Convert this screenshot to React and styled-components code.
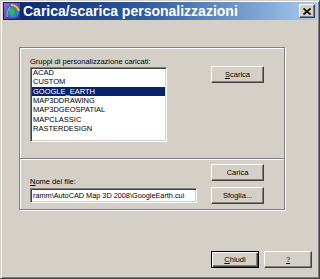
import React from "react";
import styled, { createGlobalStyle } from "styled-components";

const GlobalStyle = createGlobalStyle`
  html, body {
    margin: 0;
    padding: 0;
    background: #d4d0c8;
  }
  body {
    font-family: "Liberation Sans", Arial, sans-serif;
    color: #000;
  }
`;

const Window = styled.div`
  width: 320px;
  height: 279px;
  box-sizing: border-box;
  background: #d4d0c8;
  border: 1px solid;
  border-color: #d4d0c8 #404040 #404040 #d4d0c8;
  box-shadow: inset 1px 1px 0 #fff, inset -1px -1px 0 #808080;
  padding: 1px 2px 2px 2px;
  display: flex;
  flex-direction: column;
`;

const TitleBar = styled.div`
  height: 18px;
  display: flex;
  align-items: center;
  gap: 3px;
  padding: 0 2px 0 1px;
  background: linear-gradient(to right, #0a246a 0%, #2f5c9c 45%, #a6caf0 100%);
`;

const Title = styled.span`
  font-size: 14px;
  font-weight: bold;
  color: #fff;
  white-space: nowrap;
`;

const CloseButton = styled.button`
  margin-left: auto;
  width: 16px;
  height: 14px;
  padding: 0;
  display: flex;
  align-items: center;
  justify-content: center;
  background: #d4d0c8;
  border: 1px solid;
  border-color: #fff #404040 #404040 #fff;
  box-shadow: inset -1px -1px 0 #808080;
`;

const Body = styled.div`
  flex: 1;
  display: flex;
  flex-direction: column;
  padding: 27px 0 0 16px;
`;

const Group = styled.div`
  width: 266px;
  height: 163px;
  box-sizing: border-box;
  border: 1px solid #808080;
  box-shadow: inset 1px 1px 0 #fff, 1px 1px 0 #fff;
  display: flex;
  flex-direction: column;
`;

const TopSection = styled.div`
  height: 110px;
  box-sizing: border-box;
  padding: 8px 0 0 10px;
  display: grid;
  grid-template-columns: 137px 53px;
  grid-template-rows: 11px 75px;
  column-gap: 44px;
`;

const Separator = styled.div`
  height: 1px;
  background: #808080;
  border-bottom: 1px solid #fff;
`;

const BottomSection = styled.div`
  display: flex;
  gap: 14px;
  padding: 4px 0 0 10px;
`;

const FileColumn = styled.div`
  display: flex;
  flex-direction: column;
  padding-top: 12px;
  width: 167px;
`;

const ButtonColumn = styled.div`
  display: flex;
  flex-direction: column;
  gap: 6px;
`;

const Label = styled.div`
  font-size: 7.5px;
  line-height: 11px;
  white-space: nowrap;
`;

const Sunken = styled.div`
  box-sizing: border-box;
  background: #fff;
  border: 1px solid;
  border-color: #808080 #fff #fff #808080;
  box-shadow: inset 1px 1px 0 #404040, inset -1px -1px 0 #d4d0c8;
`;

const ListBox = styled(Sunken)`
  grid-column: 1;
  grid-row: 2;
  padding: 0 1px;
  overflow: hidden;
`;

const ListItem = styled.div`
  height: 9.33px;
  line-height: 9.33px;
  font-size: 7.5px;
  padding-left: 1px;
  white-space: nowrap;
  background: ${({ $selected }) => ($selected ? "#0a246a" : "transparent")};
  color: ${({ $selected }) => ($selected ? "#fff" : "#000")};
`;

const FileInput = styled(Sunken)`
  margin-top: 1px;
  height: 15px;
  padding: 0 2px;
  font-size: 7.3px;
  line-height: 13px;
  white-space: nowrap;
  overflow: hidden;
`;

const Button = styled.button`
  width: ${({ $width }) => $width || 53}px;
  height: 17px;
  padding: 0;
  box-sizing: border-box;
  font-family: "Liberation Sans", Arial, sans-serif;
  font-size: 7.5px;
  color: #000;
  background: #d4d0c8;
  border: 1px solid;
  border-color: ${({ $default }) =>
    $default ? "#000" : "#fff #404040 #404040 #fff"};
  box-shadow: ${({ $default }) =>
    $default
      ? "inset 1px 1px 0 #fff, inset -1px -1px 0 #404040, inset -2px -2px 0 #808080"
      : "inset -1px -1px 0 #808080"};
  align-self: start;
`;

const ScaricaButton = styled(Button)`
  grid-column: 2;
  grid-row: 2;
  margin-top: -1px;
`;

const Footer = styled.div`
  margin-top: 41px;
  display: flex;
  justify-content: flex-end;
  gap: 5px;
  padding-right: 5px;
`;

const Key = styled.span`
  text-decoration: underline;
`;

const groups = [
  "ACAD",
  "CUSTOM",
  "GOOGLE_EARTH",
  "MAP3DDRAWING",
  "MAP3DGEOSPATIAL",
  "MAPCLASSIC",
  "RASTERDESIGN",
];

function AppIcon() {
  return (
    <svg width="16" height="16" viewBox="0 0 16 16">
      <defs>
        <linearGradient id="bg" x1="0" y1="0" x2="1" y2="1">
          <stop offset="0" stopColor="#9a6cc8" />
          <stop offset="1" stopColor="#3b2a86" />
        </linearGradient>
      </defs>
      <rect x="0" y="0" width="16" height="16" fill="url(#bg)" />
      <circle cx="9" cy="9" r="6" fill="#2f7fd0" />
      <path d="M5 6 Q8 4 10 7 Q12 10 9 13 Q6 12 5 9 Z" fill="#3cb44a" />
      <path d="M7 2 Q13 2 15 8" stroke="#f2c230" strokeWidth="2" fill="none" />
      <path d="M3 14 Q2 8 6 4" stroke="#5ad0e0" strokeWidth="1" fill="none" />
    </svg>
  );
}

function CloseIcon() {
  return (
    <svg width="8" height="7" viewBox="0 0 8 7">
      <path d="M0.5 0.5 L7.5 6.5 M7.5 0.5 L0.5 6.5" stroke="#000" strokeWidth="1.6" />
    </svg>
  );
}

export default function App() {
  return (
    <>
      <GlobalStyle />
      <Window>
        <TitleBar>
          <AppIcon />
          <Title>Carica/scarica personalizzazioni</Title>
          <CloseButton>
            <CloseIcon />
          </CloseButton>
        </TitleBar>
        <Body>
          <Group>
            <TopSection>
              <Label>Gruppi di personalizzazione caricati:</Label>
              <ListBox>
                {groups.map((g) => (
                  <ListItem key={g} $selected={g === "GOOGLE_EARTH"}>
                    {g}
                  </ListItem>
                ))}
              </ListBox>
              <ScaricaButton>
                <Key>S</Key>carica
              </ScaricaButton>
            </TopSection>
            <Separator />
            <BottomSection>
              <FileColumn>
                <Label>
                  <Key>N</Key>ome del file:
                </Label>
                <FileInput>ramm\AutoCAD Map 3D 2008\GoogleEarth.cui</FileInput>
              </FileColumn>
              <ButtonColumn>
                <Button>Carica</Button>
                <Button>Sfoglia...</Button>
              </ButtonColumn>
            </BottomSection>
          </Group>
          <Footer>
            <Button $default $width={48}>
              <Key>C</Key>hiudi
            </Button>
            <Button $width={48}>
              <Key>?</Key>
            </Button>
          </Footer>
        </Body>
      </Window>
    </>
  );
}
